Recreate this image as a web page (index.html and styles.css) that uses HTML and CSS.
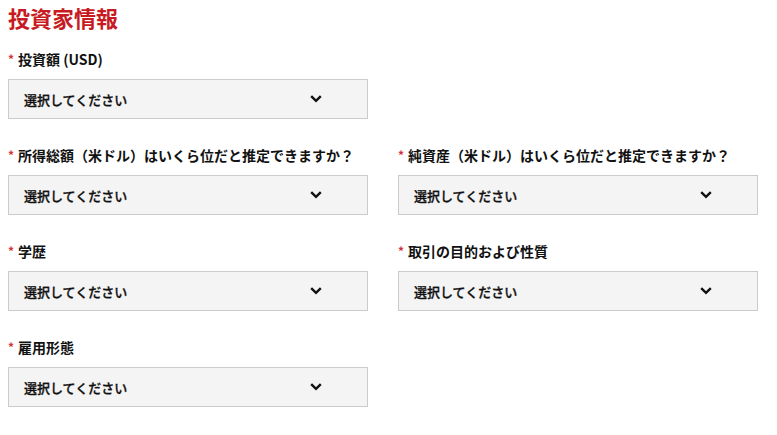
FILE: index.html
```html
<!DOCTYPE html>
<html lang="ja">
<head>
<meta charset="utf-8">
<link rel="stylesheet" href="styles.css">
</head>
<body>
<section class="investor">
  <h2 class="title">投資家情報</h2>
  <div class="grid">
    <div class="field">
      <label class="label"><span class="req">*</span>投資額 (USD)</label>
      <div class="select"><span>選択してください</span><svg class="chev" width="12" height="8" viewBox="0 0 12 8"><polyline points="1.2,1.2 6,5.8 10.8,1.2" fill="none" stroke="#111" stroke-width="2.4"/></svg></div>
    </div>
    <div class="field empty"></div>
    <div class="field">
      <label class="label"><span class="req">*</span>所得総額（米ドル）はいくら位だと推定できますか？</label>
      <div class="select"><span>選択してください</span><svg class="chev" width="12" height="8" viewBox="0 0 12 8"><polyline points="1.2,1.2 6,5.8 10.8,1.2" fill="none" stroke="#111" stroke-width="2.4"/></svg></div>
    </div>
    <div class="field">
      <label class="label"><span class="req">*</span>純資産（米ドル）はいくら位だと推定できますか？</label>
      <div class="select"><span>選択してください</span><svg class="chev" width="12" height="8" viewBox="0 0 12 8"><polyline points="1.2,1.2 6,5.8 10.8,1.2" fill="none" stroke="#111" stroke-width="2.4"/></svg></div>
    </div>
    <div class="field">
      <label class="label"><span class="req">*</span>学歴</label>
      <div class="select"><span>選択してください</span><svg class="chev" width="12" height="8" viewBox="0 0 12 8"><polyline points="1.2,1.2 6,5.8 10.8,1.2" fill="none" stroke="#111" stroke-width="2.4"/></svg></div>
    </div>
    <div class="field">
      <label class="label"><span class="req">*</span>取引の目的および性質</label>
      <div class="select"><span>選択してください</span><svg class="chev" width="12" height="8" viewBox="0 0 12 8"><polyline points="1.2,1.2 6,5.8 10.8,1.2" fill="none" stroke="#111" stroke-width="2.4"/></svg></div>
    </div>
    <div class="field">
      <label class="label"><span class="req">*</span>雇用形態</label>
      <div class="select"><span>選択してください</span><svg class="chev" width="12" height="8" viewBox="0 0 12 8"><polyline points="1.2,1.2 6,5.8 10.8,1.2" fill="none" stroke="#111" stroke-width="2.4"/></svg></div>
    </div>
  </div>
</section>
</body>
</html>
```

FILE: styles.css
```css
html, body {
  margin: 0;
  padding: 0;
  background: #fff;
}
body {
  padding: 4px 8px 0 8px;
  font-family: "Noto Sans CJK JP", "Noto Sans", sans-serif;
  color: #111;
}
.investor {
  width: 750px;
}
.title {
  margin: 0;
  font-size: 22px;
  line-height: 26px;
  font-weight: 700;
  color: #c81a22;
}
.grid {
  margin-top: 19px;
  display: grid;
  grid-template-columns: 360px 360px;
  column-gap: 30px;
  row-gap: 26px;
}
.field {
  display: flex;
  flex-direction: column;
  gap: 10px;
}
.label {
  display: flex;
  align-items: center;
  font-size: 14px;
  line-height: 20px;
  font-weight: 700;
  white-space: nowrap;
}
.req {
  color: #d0343a;
  font-size: 12px;
  width: 10px;
}
.select {
  box-sizing: border-box;
  height: 40px;
  display: flex;
  align-items: center;
  justify-content: space-between;
  padding: 0 45px 0 15px;
  background: #f4f4f4;
  border: 1px solid #cbcbcb;
  font-size: 13px;
  font-weight: 500;
  -webkit-text-stroke: 0.3px #111;
}
.chev {
  display: block;
}
```
